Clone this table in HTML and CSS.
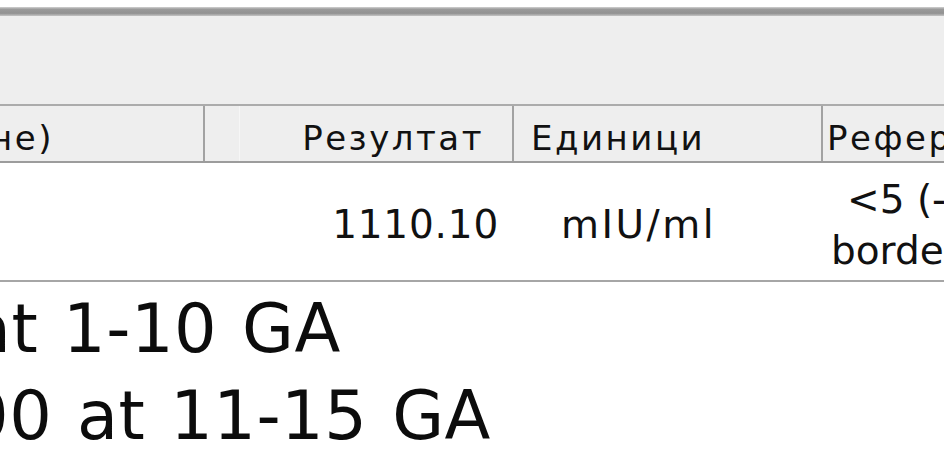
FILE: index.html
```html
<!DOCTYPE html>
<html lang="bg">
<head>
<meta charset="utf-8">
<title>Резултати</title>
<link rel="stylesheet" href="styles.css">
</head>
<body>
<div class="page">
  <div class="frame-top"></div>
  <div class="caption-panel"></div>
  <div class="results">
    <div class="row head">
      <div class="cell c-name"><span class="cut">не)</span></div>
      <div class="cell c-gap"></div>
      <div class="cell c-result">Резултат</div>
      <div class="cell c-units">Единици</div>
      <div class="cell c-ref">Референтни граници</div>
    </div>
    <div class="row data">
      <div class="cell c-name"></div>
      <div class="cell c-gap"></div>
      <div class="cell c-result"><span class="result-num">1110.10</span></div>
      <div class="cell c-units"><span class="units">mIU/ml</span></div>
      <div class="cell c-ref"><span class="ref-text">&lt;5 (-)<br>borderline 5-25</span></div>
    </div>
  </div>
  <div class="notes">
    <p class="note n1">at 1-10 GA</p>
    <p class="note n2">00 at 11-15 GA</p>
  </div>
</div>
</body>
</html>
```

FILE: styles.css
```css
html, body {
  margin: 0;
  padding: 0;
  background: #ffffff;
  overflow: hidden;
}

.page {
  width: 944px;
  height: 460px;
  overflow: hidden;
  font-family: "DejaVu Sans", Verdana, sans-serif;
  color: #111111;
  padding-top: 7px;
  box-sizing: border-box;
}

.frame-top {
  height: 9px;
  background: linear-gradient(#d2d2d2 0%, #9a9a9a 25%, #929292 70%, #c4c4c4 100%);
}

.caption-panel {
  height: 88px;
  background: #eeeeee;
}

.results {
  width: 1200px;
}

.row {
  display: grid;
  grid-template-columns: 205px 35px 274px 309px 377px;
}

.cell {
  box-sizing: border-box;
  white-space: nowrap;
  display: flex;
  align-items: center;
}

.head {
  background: #eeeeee;
  border-top: 2px solid #ababab;
  border-bottom: 2px solid #9c9c9c;
  height: 59px;
  box-sizing: border-box;
  font-size: 34px;
  line-height: 45px;
  letter-spacing: 2.5px;
}

.head .cell {
  padding-top: 10px;
}

.head .c-name {
  border-right: 2px solid #a2a2a2;
}

.head .c-gap {
  border-right: 1px solid #f6f6f6;
}

.head .c-result {
  border-right: 2px solid #a2a2a2;
  justify-content: flex-end;
  padding-right: 28px;
}

.head .c-units {
  border-right: 2px solid #a2a2a2;
  padding-left: 17px;
}

.head .c-ref {
  padding-left: 4px;
}

.cut {
  margin-left: -10px;
}

.data {
  background: #ffffff;
  border-bottom: 2px solid #a6a6a6;
  height: 119px;
  box-sizing: border-box;
  font-size: 39px;
  line-height: 51px;
}

.data .cell {
  padding-top: 6px;
}

.data .c-result {
  justify-content: flex-end;
  padding-right: 15px;
}

.result-num {
  letter-spacing: 0.8px;
}

.data .c-units {
  padding-left: 47px;
}

.units {
  letter-spacing: 2.5px;
}

.data .c-ref {
  padding-left: 8px;
}

.ref-text {
  display: block;
  text-indent: 16px;
}

.notes {
  margin-top: 4px;
  font-size: 67px;
  line-height: 87px;
  color: #0c0c0c;
  letter-spacing: 0.5px;
  word-spacing: 3px;
}

.note {
  margin: 0;
  white-space: nowrap;
}

.n1 {
  margin-left: -30px;
}

.n2 {
  margin-left: -34px;
}
```
